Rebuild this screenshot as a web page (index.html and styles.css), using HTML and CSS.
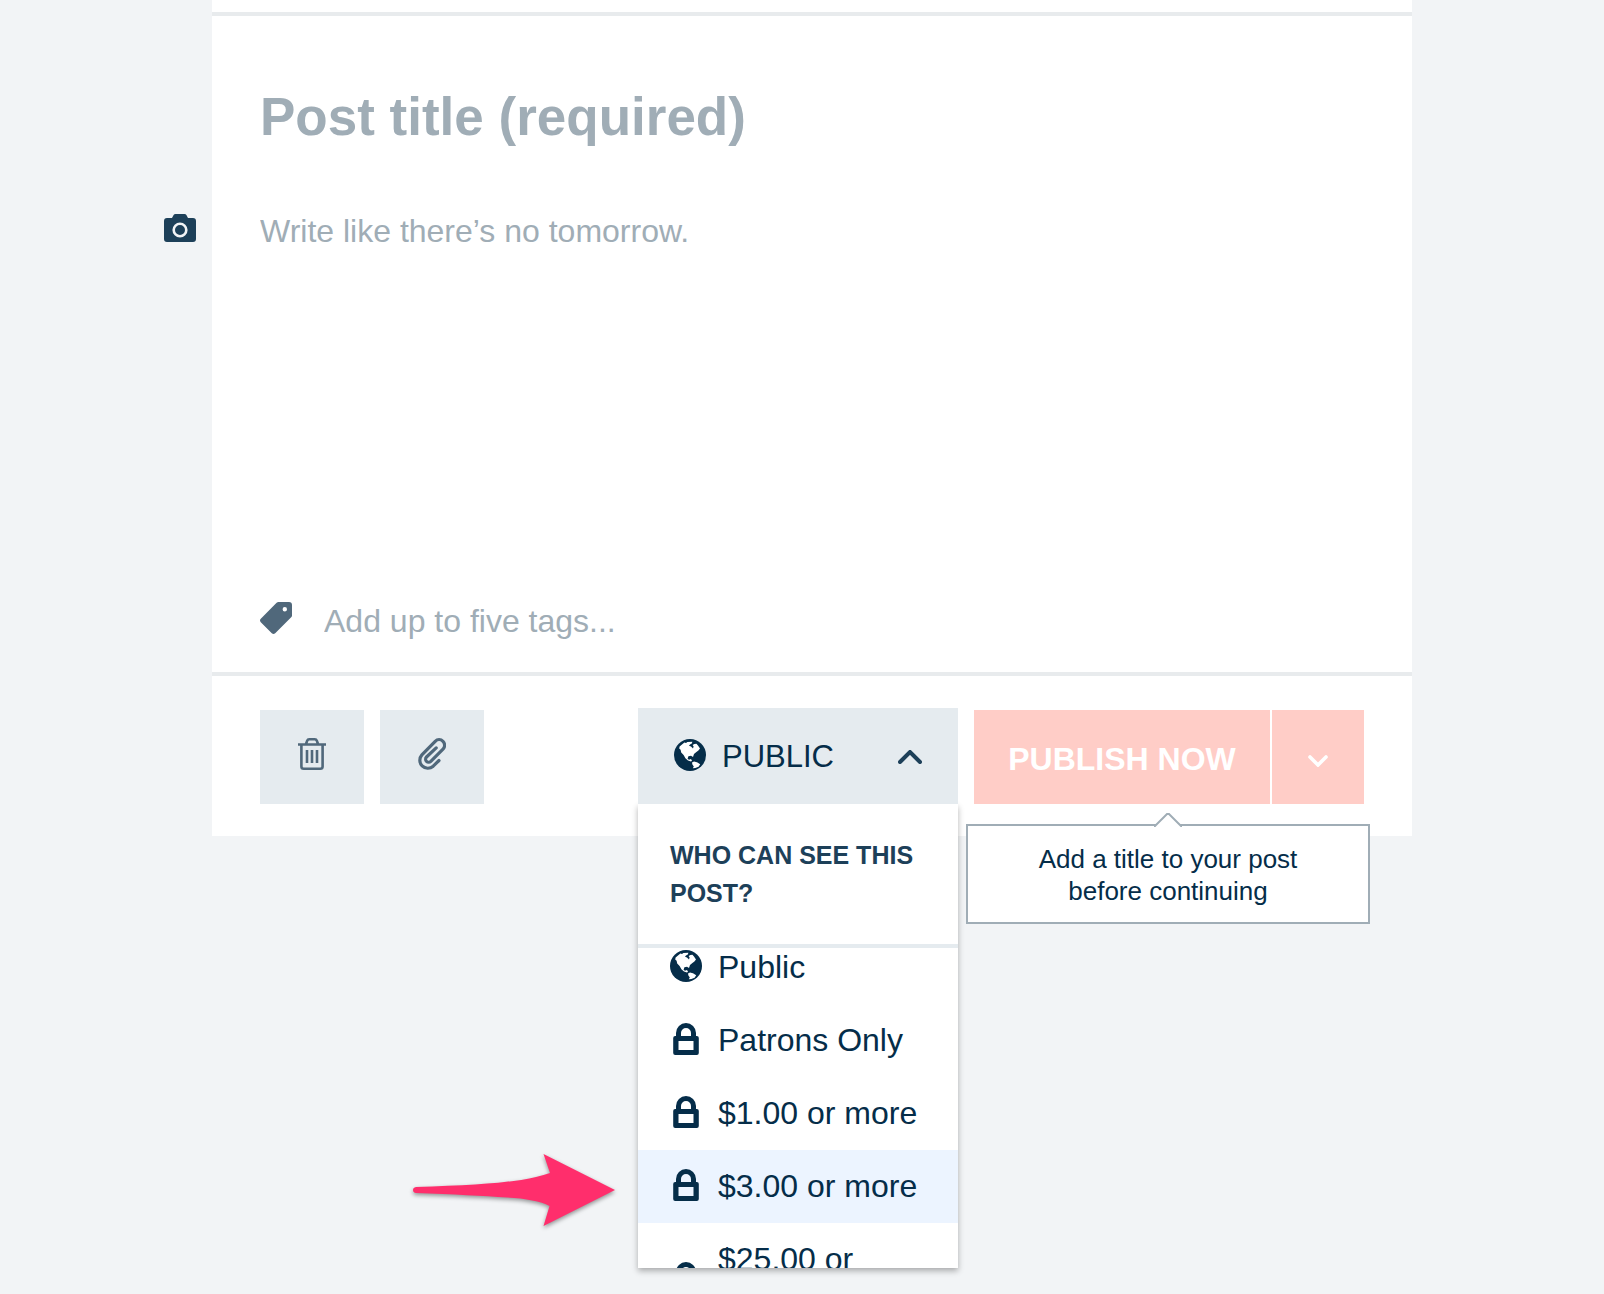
FILE: index.html
```html
<!DOCTYPE html>
<html lang="en">
  <head>
    <meta charset="UTF-8" />
    <meta name="viewport" content="width=device-width, initial-scale=1.0" />
    <title>New post</title>
    <link rel="stylesheet" href="styles.css">
  </head>
  <body>
    <!-- shared icons -->
    <svg class="sprite" aria-hidden="true">
      <symbol id="globe" viewBox="0 0 32 32">
        <circle cx="16" cy="16" r="16" fill="currentColor" />
        <path class="land" d="M5.6 7.4 8 5.4 10.4 3.6 12 4 13.4 2.9 18.4 2.8 17.8 4.4 16 5.6 15 6.8 17 7.6 19 9.4 19.6 7.400 18.600 6 20.400 5 22.400 4.800 24 6.600 26 9.600 24.400 11.600 22.400 13 20 15 19 18 17 16.800 14.400 17.200 13.600 19.800 15 20.800 17 20 18 21.800 17 22.600 14 21.600 11.400 19.200 9.600 16 7.200 13.600 6.600 10.800 5.200 9.400Z" />
        <path class="land" d="M18 23.400 20 22.600 23 23.200 26.200 25.200 24.600 27.800 21.400 29 18.800 29.200 19.800 27.400 18.400 25.600Z" />
      </symbol>
      <symbol id="lock" viewBox="0 0 32 32">
        <path d="M8.500 15v-5a7.500 7.500 0 0 1 15 0v5" fill="none" stroke="currentColor" stroke-width="5" />
        <path d="M5.200 13h21.600a2 2 0 0 1 2 2v15a2 2 0 0 1-2 2H5.200a2 2 0 0 1-2-2V15a2 2 0 0 1 2-2ZM8.500 18v9h15v-9Z" fill="currentColor" fill-rule="evenodd" />
      </symbol>
    </svg>

    <main class="card">
      <div class="card-top"></div>

      <section class="compose">
        <input class="title" type="text" aria-label="Post title" placeholder="Post title (required)" />

        <div class="body-row">
          <button class="camera" type="button" aria-label="Add image">
            <svg width="32" height="28" viewBox="0 0 32 28">
              <path d="M3 4h5l1.600-3Q10.200 0 11.500 0h9q1.300 0 1.900 1L24 4h5q3 0 3 3v18q0 3-3 3H3q-3 0-3-3V7q0-3 3-3Z" fill="#1d4059" />
              <circle cx="16" cy="16" r="6.300" fill="none" stroke="#f2f4f6" stroke-width="2.600" />
            </svg>
          </button>
          <textarea class="text" aria-label="Post body" placeholder="Write like there’s no tomorrow."></textarea>
        </div>

        <div class="tags-row">
          <svg class="tag-icon" width="32" height="32" viewBox="0 0 32 32" aria-hidden="true">
            <path d="M18.500 0H29q3 0 3 3v10.500q0 1-.8 1.800L15.200 31.200q-1.700 1.600-3.400 0L.8 20.200q-1.600-1.700 0-3.400L16.600.8Q17.400 0 18.500 0Zm6.300 5a2.200 2.200 0 1 0 0 4.400 2.200 2.200 0 0 0 0-4.400Z" fill="#50687b" fill-rule="evenodd" />
          </svg>
          <input class="tags" type="text" aria-label="Tags" placeholder="Add up to five tags..." />
        </div>
      </section>

      <footer class="actions">
        <button class="tool" type="button" aria-label="Delete post">
          <svg width="28" height="32" viewBox="0 0 28 32" fill="none" stroke="#50687b" stroke-width="2.600">
            <path d="M0 6.500h28M8 6 9.200 2.600Q9.700 1.300 11.200 1.300h5.600q1.500 0 2 1.300L20 6M3.400 7v21.400q0 2.300 2.300 2.300h16.600q2.300 0 2.300-2.300V7" />
            <path d="M9 12v13M14 12v13M19 12v13" />
          </svg>
        </button>
        <button class="tool" type="button" aria-label="Attach file">
          <svg width="28" height="32" viewBox="0 0 28 32" fill="none" stroke="#50687b" stroke-width="3.200" stroke-linecap="round">
            <path d="M21 22.500 15.200 28.200A8 8 0 0 1 3.900 16.900L17.200 3.300A5.500 5.500 0 0 1 25 11.100L12.800 23.300A3 3 0 0 1 8.500 19L18.200 9.900" />
          </svg>
        </button>

        <div class="visibility">
          <button class="visibility-toggle" type="button" aria-expanded="true" aria-controls="tiers">
            <svg class="icon" width="32" height="32"><use href="#globe" /></svg>
            <span>PUBLIC</span>
            <svg class="chevron" width="24" height="14" viewBox="0 0 24 14" fill="none" stroke="#1d4059" stroke-width="4" stroke-linecap="round">
              <path d="M2 12 12 2 22 12" />
            </svg>
          </button>

          <div class="menu" id="tiers">
            <h2 class="menu-title">WHO CAN SEE THIS POST?</h2>
            <div class="menu-view">
              <ul class="menu-list">
                <li><button class="tier" type="button"><svg class="icon" width="32" height="32"><use href="#globe" /></svg><span>Public</span></button></li>
                <li><button class="tier" type="button"><svg class="icon" width="32" height="32"><use href="#lock" /></svg><span>Patrons Only</span></button></li>
                <li><button class="tier" type="button"><svg class="icon" width="32" height="32"><use href="#lock" /></svg><span>$1.00 or more</span></button></li>
                <li><button class="tier active" type="button"><svg class="icon" width="32" height="32"><use href="#lock" /></svg><span>$3.00 or more</span></button></li>
                <li><button class="tier" type="button"><svg class="icon" width="32" height="32"><use href="#lock" /></svg><span>$25.00 or more</span></button></li>
              </ul>
            </div>
          </div>

          <svg class="pointer" width="204" height="74" viewBox="0 0 204 74" aria-hidden="true">
            <path d="M4 34Q95 31.500 124 24 132 22 138 20L131.500 1 203 37 131.500 73 137.500 53Q124 46 95 44.500 60 42 4 40Q1 39.500 1 37T4 34Z" fill="#ff2e6c" />
          </svg>
        </div>

        <div class="publish">
          <button class="publish-now" type="button">PUBLISH NOW</button>
          <button class="publish-more" type="button" aria-label="More publish options">
            <svg width="20" height="12" viewBox="0 0 20 12" fill="none" stroke="#fff" stroke-width="3.600" stroke-linecap="round">
              <path d="M2 2 10 10 18 2" />
            </svg>
          </button>
          <div class="tooltip" role="tooltip">
            <svg class="tooltip-tip" width="28" height="14" viewBox="0 0 28 14" aria-hidden="true">
              <path d="M0 14V13L2 12 13 1h2L26 12 28 13v1Z" fill="#fff" />
              <path d="M0 13h1L13 1h2L27 13h1" fill="none" stroke="#a0adb6" stroke-width="2" />
            </svg>
            Add a title to your post before continuing
          </div>
        </div>
      </footer>
    </main>
  </body>
</html>
```
FILE: styles.css
```css
* {
  box-sizing: border-box;
  margin: 0;
  padding: 0;
}

body {
  min-height: 100vh;
  padding-left: 20px;
  background-color: #f2f4f6;
  font-family: "Liberation Sans", Arial, Helvetica, sans-serif;
  font-size: 32px;
  color: #052d49;
}

button,
input,
textarea {
  border: none;
  border-radius: 0;
  background: none;
  color: inherit;
  font: inherit;
}

button {
  cursor: pointer;
}

svg {
  display: block;
  flex-shrink: 0;
}

.sprite {
  position: absolute;
  width: 0;
  height: 0;
}

.land {
  fill: #fff;
}

.card {
  max-width: 1200px;
  margin: 0 auto;
  background-color: #fff;
}

.card-top {
  height: 16px;
  border-bottom: 4px solid #e8ebed;
}

/* Editor */
.compose {
  display: flex;
  flex-direction: column;
  padding: 70px 48px 27px;
  border-bottom: 4px solid #e8ebed;
}

::placeholder {
  color: #a0adb6;
  opacity: 1;
}

.title {
  width: 100%;
  height: 60px;
  margin-bottom: 61px;
  font-size: 53px;
  font-weight: bold;
}

.body-row {
  display: flex;
  align-items: flex-start;
  gap: 64px;
  /* the camera button hangs outside the card */
  margin-left: -96px;
}

.camera {
  padding-top: 7px;
}

.text {
  flex: 1;
  height: 360px;
  line-height: 48px;
  resize: none;
}

.tags-row {
  display: flex;
  align-items: center;
  gap: 32px;
  margin-top: 30px;
}

.tag-icon {
  margin-bottom: 6px;
}

.tags {
  flex: 1;
  height: 48px;
}

/* Footer */
.actions {
  display: flex;
  align-items: flex-end;
  gap: 16px;
  padding: 32px 48px;
}

.tool {
  display: flex;
  align-items: center;
  justify-content: center;
  width: 104px;
  height: 94px;
  padding-bottom: 6px;
  background-color: #e5ebef;
}

.visibility {
  position: relative;
  width: 320px;
  margin-left: auto;
}

/* sits above the menu so its shadow stays off the toggle */
.visibility-toggle {
  position: relative;
  z-index: 1;
  display: flex;
  align-items: center;
  gap: 16px;
  width: 100%;
  height: 96px;
  padding: 1px 36px 0;
  background-color: #e5ebef;
  font-size: 31px;
}

.icon {
  margin-bottom: 4px;
}

.chevron {
  margin-left: auto;
}

.menu {
  position: absolute;
  top: 100%;
  left: 0;
  width: 100%;
  background-color: #fff;
  box-shadow: 0 3px 6px rgba(0, 0, 0, 0.3);
}

.menu-title {
  padding: 32px;
  border-bottom: 4px solid #e5ebef;
  color: #1d4059;
  font-size: 25px;
  line-height: 38px;
}

.menu-view {
  height: 320px;
  overflow: hidden;
}

.menu-list {
  margin-top: -17px;
  list-style: none;
}

.tier {
  display: flex;
  align-items: center;
  gap: 16px;
  width: 100%;
  padding: 16px 32px;
  line-height: 41px;
  text-align: left;
}

.tier.active {
  background-color: #ecf4ff;
}

.pointer {
  position: absolute;
  top: 445px;
  right: calc(100% + 22px);
  filter: drop-shadow(0 2px 2px rgba(0, 0, 0, 0.4));
}

.publish {
  position: relative;
  display: flex;
  gap: 2px;
}

.publish-now,
.publish-more {
  height: 94px;
  padding-top: 4px;
  background-color: #ffcdc7;
  color: #fff;
}

.publish-now {
  width: 296px;
  font-weight: bold;
}

.publish-more {
  display: flex;
  align-items: center;
  justify-content: center;
  width: 92px;
  padding-top: 8px;
}

.tooltip {
  position: absolute;
  top: calc(100% + 20px);
  right: -6px;
  left: -8px;
  padding: 17px 60px 15px;
  border: 2px solid #a0adb6;
  background-color: #fff;
  font-size: 26px;
  line-height: 32px;
  text-align: center;
}

.tooltip-tip {
  position: absolute;
  bottom: calc(100% - 1px);
  left: calc(50% - 14px);
}
```
